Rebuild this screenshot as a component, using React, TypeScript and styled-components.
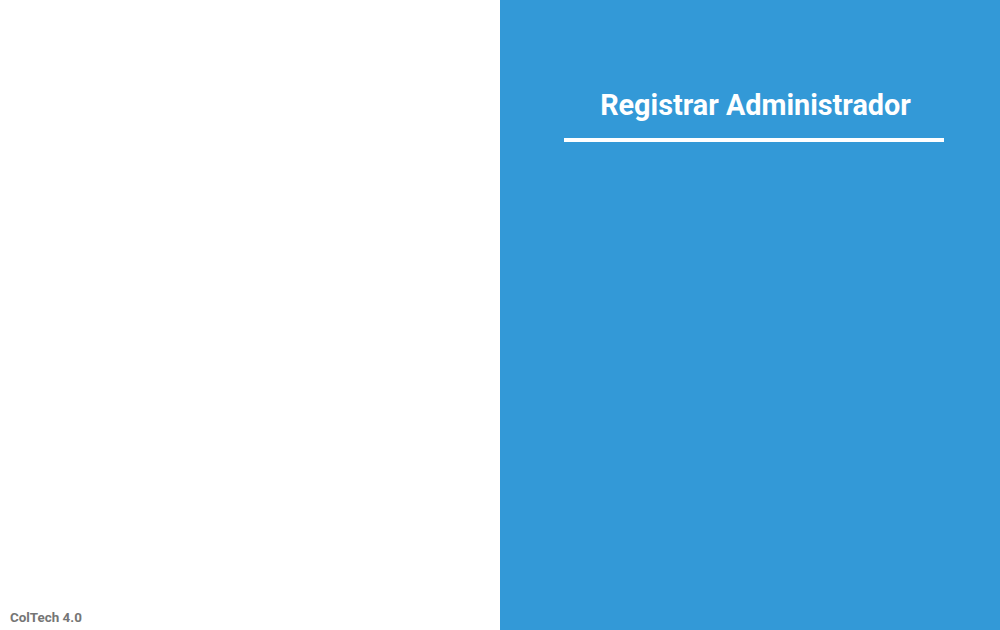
import React from "react";
import styled, { createGlobalStyle } from "styled-components";

const Global = createGlobalStyle`
  html, body { margin: 0; padding: 0; height: 100%; }
  body { font-family: Roboto, "Noto Sans", sans-serif; }
  #root { height: 100%; }
`;

const Page = styled.div`
  display: grid;
  grid-template-columns: 500px 500px;
  width: 1000px;
  height: 630px;
  overflow: hidden;
`;

const LeftPane = styled.div`
  background: #ffffff;
  display: flex;
  flex-direction: column;
  justify-content: flex-end;
  padding: 0 0 5px 10px;
`;

const Brand = styled.span`
  font-family: Roboto, sans-serif;
  font-weight: 700;
  font-size: 13.4px;
  color: #757575;
`;

const RightPane = styled.div`
  background: #3399d7;
  display: flex;
  flex-direction: column;
  align-items: stretch;
  padding: 86px 56px 0 64px;
`;

const Title = styled.h1`
  margin: 0;
  padding-left: 3px;
  font-family: Roboto, sans-serif;
  font-weight: 700;
  font-size: 28.8px;
  line-height: 38px;
  color: #ffffff;
  text-align: center;
`;

const Rule = styled.div`
  height: 4px;
  background: #ffffff;
  margin-top: 14px;
`;

export default function App() {
  return (
    <>
      <Global />
      <Page>
        <LeftPane>
          <Brand>ColTech 4.0</Brand>
        </LeftPane>
        <RightPane>
          <Title>Registrar Administrador</Title>
          <Rule />
        </RightPane>
      </Page>
    </>
  );
}
